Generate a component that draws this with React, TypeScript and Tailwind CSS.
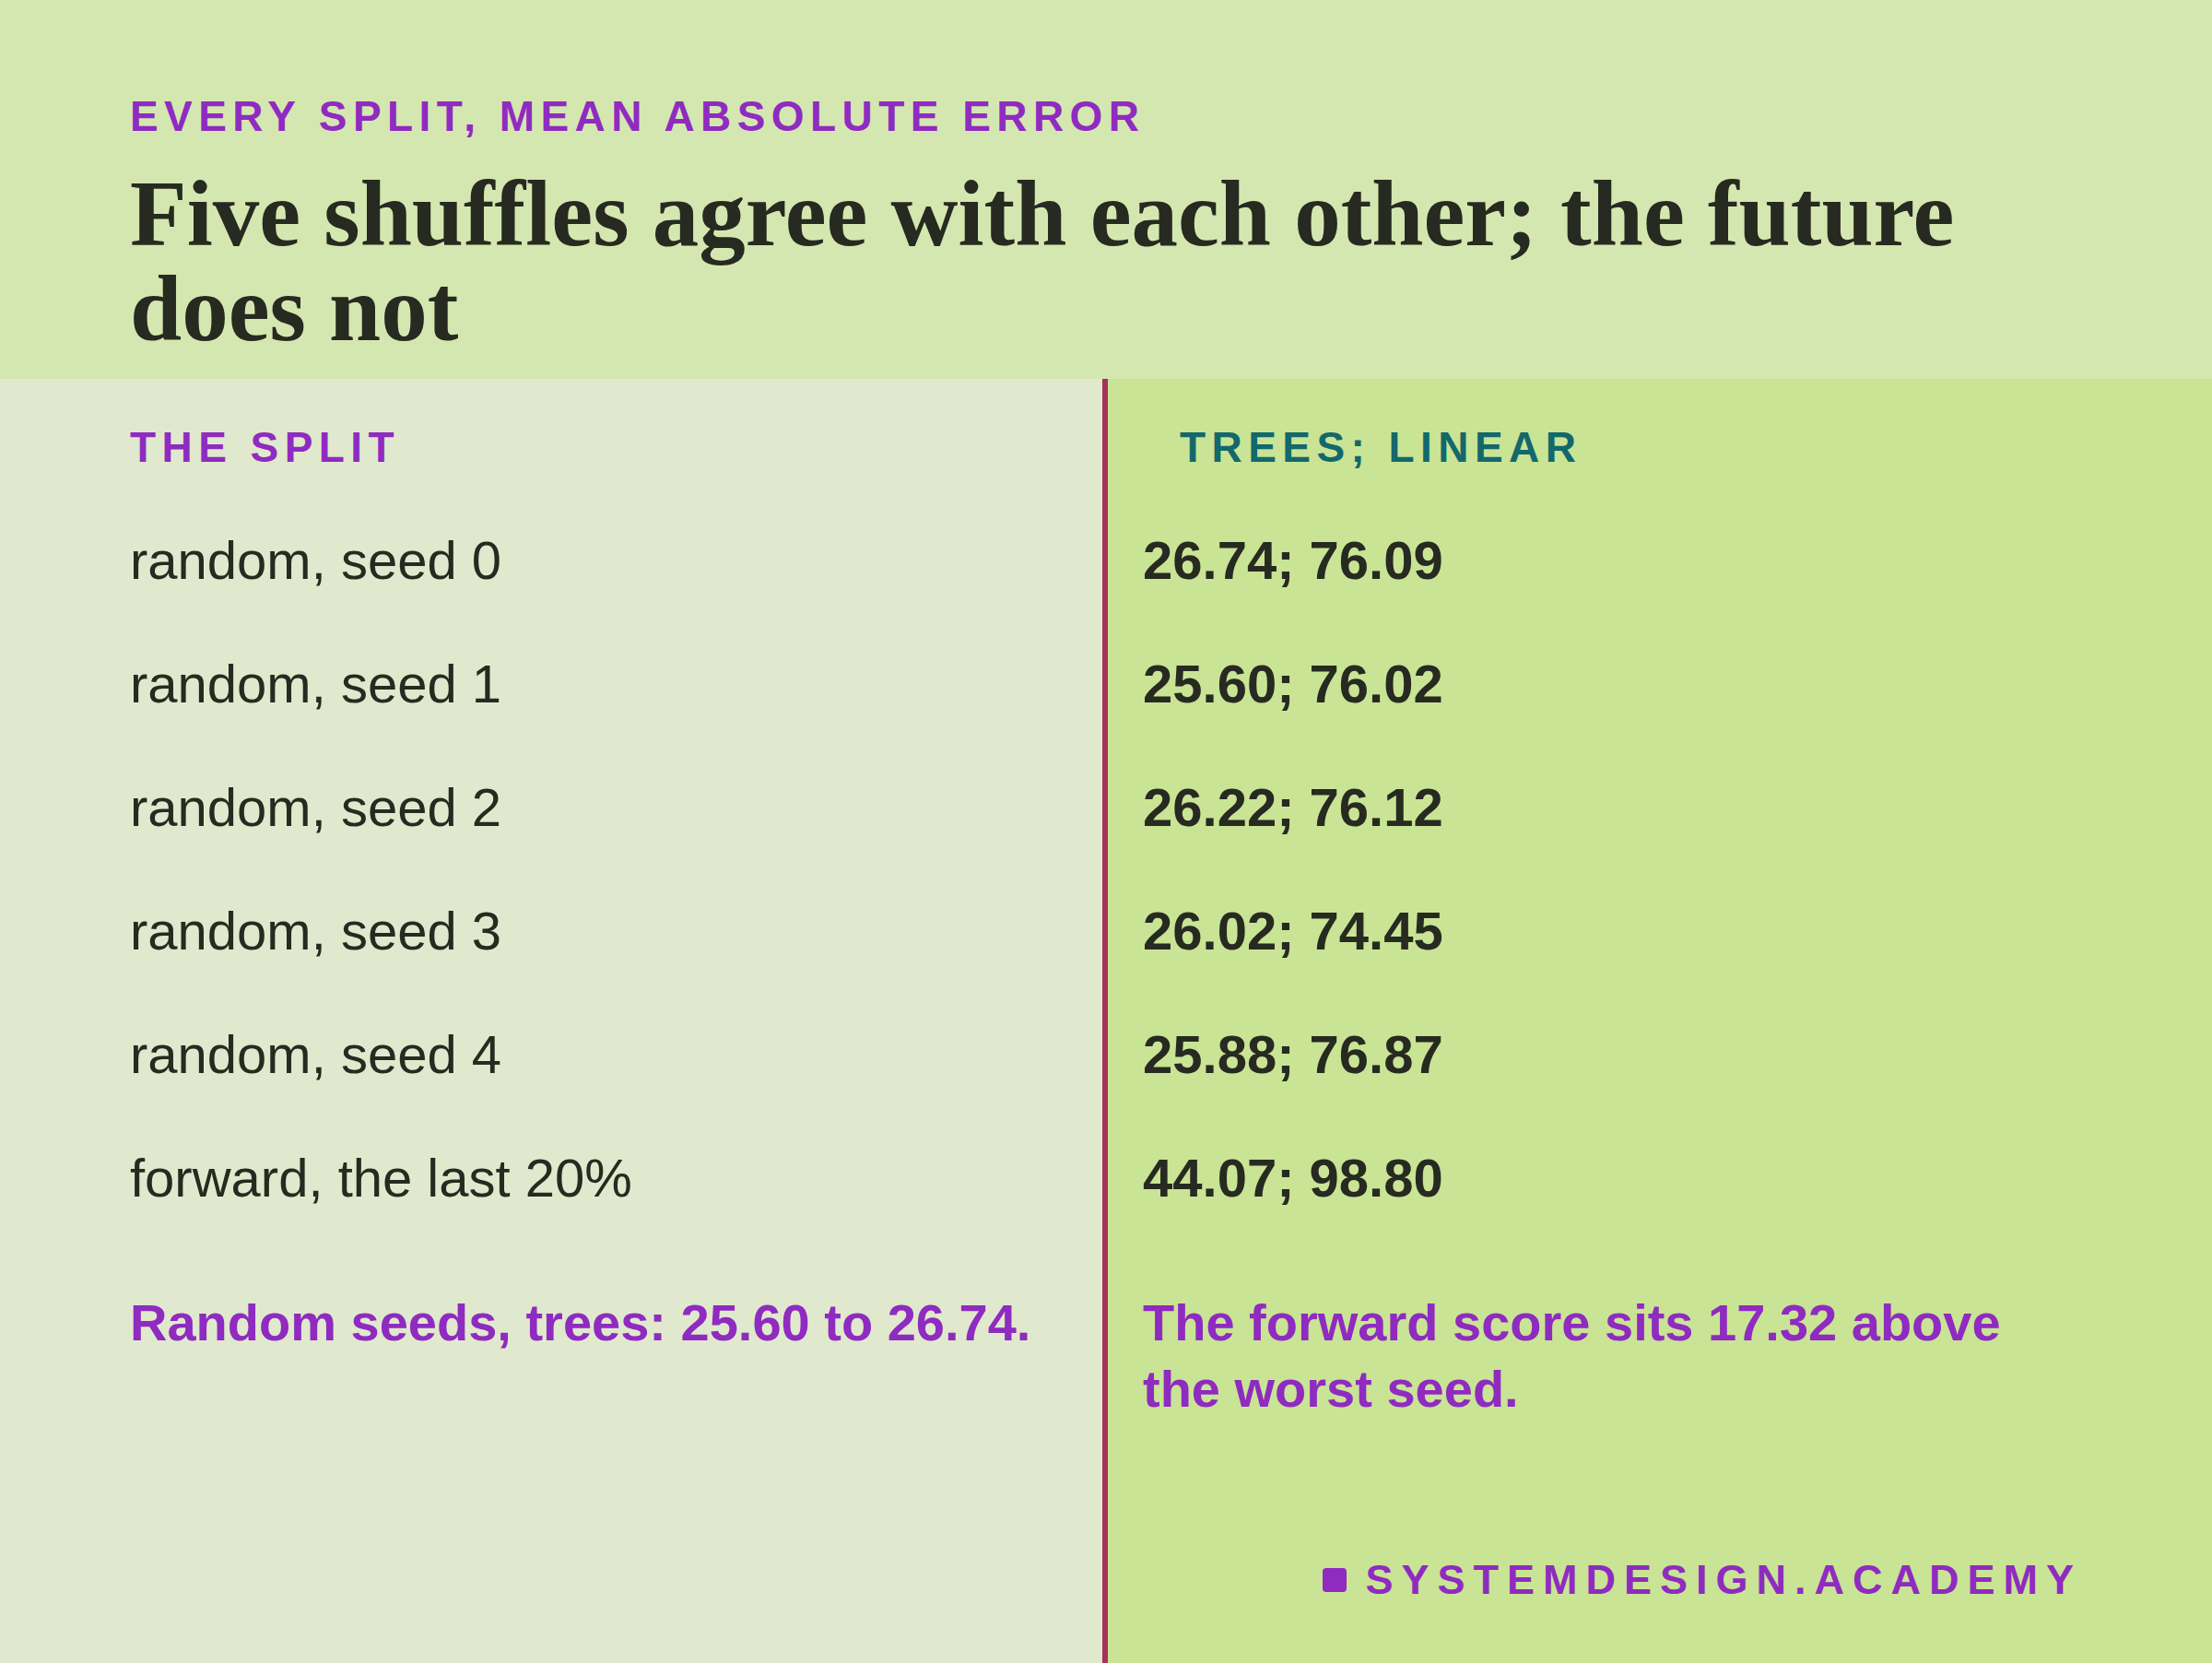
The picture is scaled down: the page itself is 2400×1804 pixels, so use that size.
import React from 'react';

const rows = [
  { split: 'random, seed 0', score: '26.74; 76.09' },
  { split: 'random, seed 1', score: '25.60; 76.02' },
  { split: 'random, seed 2', score: '26.22; 76.12' },
  { split: 'random, seed 3', score: '26.02; 74.45' },
  { split: 'random, seed 4', score: '25.88; 76.87' },
  { split: 'forward, the last 20%', score: '44.07; 98.80' },
];

const sans = "font-['Liberation_Sans',Arial,sans-serif]";

const App = () => {
  return (
    <div className={`h-screen flex flex-col bg-[#e0e9cd] text-[#272a20] ${sans}`}>
      {/* headline band */}
      <header className="bg-[#d5e7b0] px-[141px] pt-[103px] pb-[24px]">
        <p className="text-[46px] leading-none font-bold tracking-[0.14em] text-[#8f2bc0] uppercase">
          Every split, mean absolute error
        </p>
        <h1 className="mt-[32px] font-['Liberation_Serif','Times_New_Roman',serif] text-[101px] leading-[103px] font-bold">
          Five shuffles agree with each other; the future does not
        </h1>
      </header>

      <main className="flex-1 grid grid-cols-[1196px_1fr]">
        <section className="pl-[141px] pt-[51px]">
          <h2 className="text-[46px] leading-none font-bold tracking-[0.14em] text-[#8f2bc0] uppercase">
            The split
          </h2>
          <ul className="mt-[71px] flex flex-col gap-[76px]">
            {rows.map(r => (
              <li key={r.split} className="text-[58px] leading-[58px]">
                {r.split}
              </li>
            ))}
          </ul>
          <p className="mt-[92px] text-[56px] leading-[72px] font-bold text-[#8f2bc0]">
            Random seeds, trees: 25.60 to 26.74.
          </p>
        </section>

        <section className="border-l-[6px] border-[#a53258] bg-[#c9e495] pl-[38px] pr-[141px] pt-[51px] pb-[68px] flex flex-col">
          <h2 className="ml-[40px] text-[46px] leading-none font-bold tracking-[0.14em] text-[#13686b] uppercase">
            Trees; linear
          </h2>
          <ul className="mt-[71px] flex flex-col gap-[76px]">
            {rows.map(r => (
              <li key={r.score} className="text-[58px] leading-[58px] font-bold">
                {r.score}
              </li>
            ))}
          </ul>
          <p className="mt-[92px] text-[56px] leading-[72px] font-bold text-[#8f2bc0]">
            The forward score sits 17.32 above the worst seed.
          </p>
          <div className="mt-auto flex items-center justify-end gap-[20px]">
            <span className="w-[26px] h-[26px] rounded-[4px] bg-[#8f2bc0]" />
            <span className="text-[45px] leading-none font-bold tracking-[0.2em] text-[#8f2bc0]">
              SYSTEMDESIGN.ACADEMY
            </span>
          </div>
        </section>
      </main>
    </div>
  );
};

export default App;
